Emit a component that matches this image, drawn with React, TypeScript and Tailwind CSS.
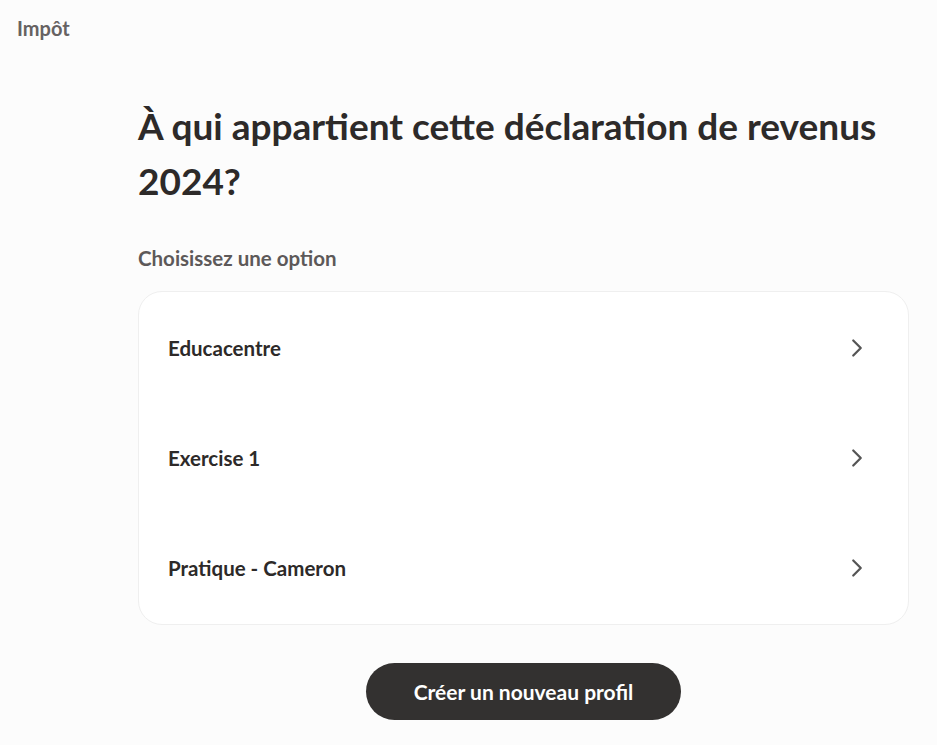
import React from 'react'
import { ChevronRight } from 'lucide-react'

const options = ['Educacentre', 'Exercise 1', 'Pratique - Cameron']

export default function App() {
  return (
    <div className="min-h-screen w-full bg-[#fcfcfc] text-[#2d2a29] font-['Lato','Liberation_Sans',sans-serif]">
      <div className="px-[17px] pt-[17px] text-[20px] font-bold leading-[22px] text-[#666262]">
        Impôt
      </div>
      <div className="flex flex-col pl-[138px] pr-[28px] pt-[59px]">
        <h1 className="text-[37px] font-bold leading-[55px] text-[#2d2a29]">
          À qui appartient cette déclaration de revenus
          <br />
          2024?
        </h1>
        <div className="mt-[38px] text-[20.5px] font-bold leading-[24px] text-[#5d5959]">
          Choisissez une option
        </div>
        <div className="mt-[21px] flex flex-col rounded-[24px] border border-[#efefef] bg-white py-[1px]">
          {options.map((o) => (
            <button
              key={o}
              className="flex h-[110px] items-center justify-between pl-[29px] pr-[36px] text-left"
            >
              <span className="text-[20.5px] font-bold text-[#2d2a29]">{o}</span>
              <ChevronRight size={30} strokeWidth={1.8} className="text-[#555]" />
            </button>
          ))}
        </div>
        <div className="mt-[38px] flex justify-center">
          <button className="h-[57px] w-[315px] rounded-full bg-[#333130] text-[21px] font-bold text-white">
            Créer un nouveau profil
          </button>
        </div>
      </div>
    </div>
  )
}
